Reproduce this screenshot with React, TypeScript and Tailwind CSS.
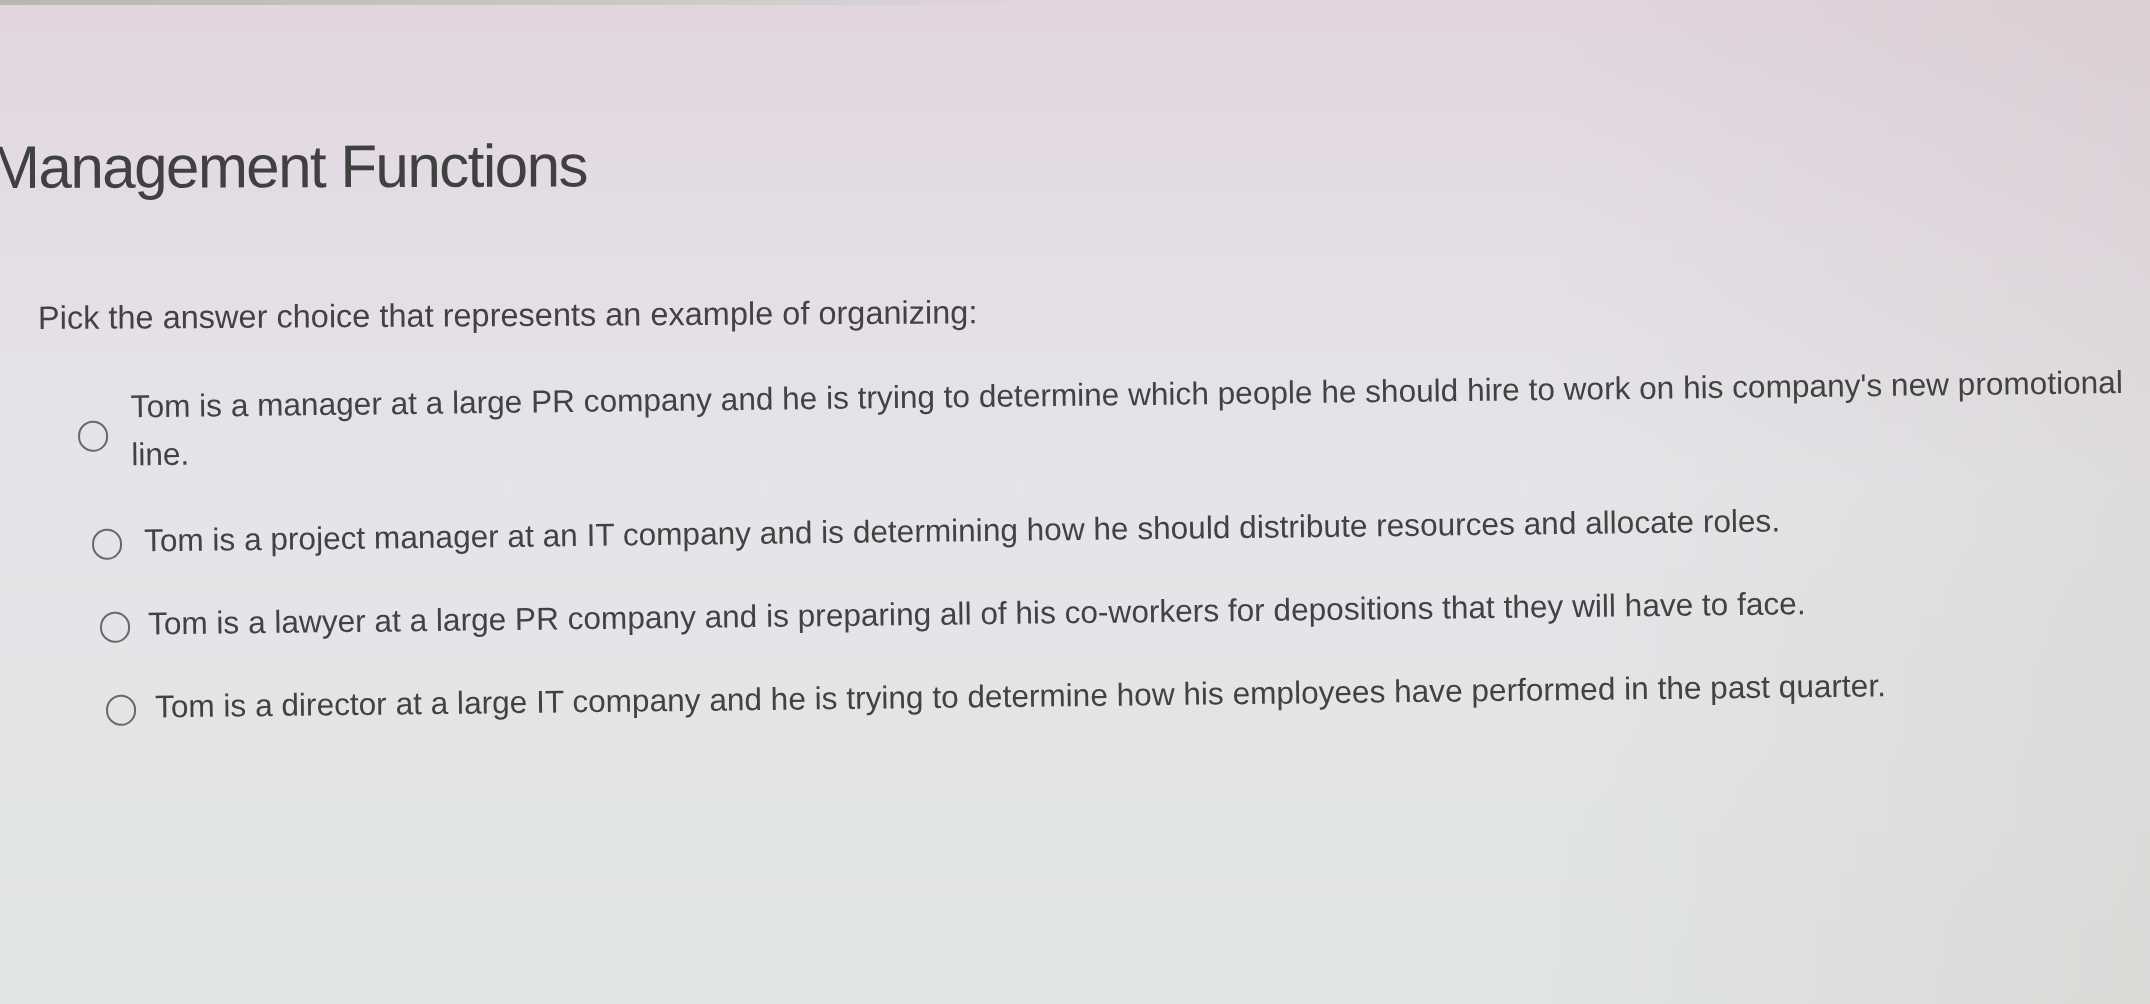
const options = [
  {
    text: "Tom is a manager at a large PR company and he is trying to determine which people he should hire to work on his company's new promotional line.",
    row: 'ml-[78px] mt-[45px] gap-[23px]',
    radio: 'mt-[10px]',
  },
  {
    text: 'Tom is a project manager at an IT company and is determining how he should distribute resources and allocate roles.',
    row: 'ml-[92px] mt-[38px] gap-[22px]',
    radio: 'mt-[6px]',
  },
  {
    text: 'Tom is a lawyer at a large PR company and is preparing all of his co-workers for depositions that they will have to face.',
    row: 'ml-[100px] mt-[35px] gap-[18px]',
    radio: 'mt-[6px]',
  },
  {
    text: 'Tom is a director at a large IT company and he is trying to determine how his employees have performed in the past quarter.',
    row: 'ml-[106px] mt-[35px] gap-[19px]',
    radio: 'mt-[6px]',
  },
];

function Radio({ className }: { className: string }) {
  return (
    <span
      className={`block h-[31px] w-[30px] shrink-0 rounded-full border-[2.5px] border-[#686868] ${className}`}
    />
  );
}

export default function App() {
  return (
    <div
      className="h-[1004px] w-full overflow-hidden bg-[linear-gradient(to_right,rgba(0,0,0,0)_72%,rgba(185,170,160,0.16)),linear-gradient(to_bottom,#e2d5de_0%,#e4dde5_22%,#e5e5e9_48%,#e0e4e2_100%)] text-[#424242]"
      style={{ fontFamily: '"Liberation Sans", Arial, sans-serif' }}
    >
      <div className="h-[5px] bg-[linear-gradient(to_right,#b6b9b3,#c9cac5_30%,rgba(0,0,0,0)_48%)]" />

      <div className="blur-[0.4px]">
        <h1 className="ml-[-10px] mt-[133px] h-[60px] text-[60px] font-normal leading-[60px] tracking-[-1.5px] text-[#404040] -rotate-[0.15deg] origin-left">
          Management Functions
        </h1>

        <p className="ml-[38px] mt-[100px] text-[32.5px] leading-[40px] -rotate-[0.35deg] origin-left">
          Pick the answer choice that represents an example of organizing:
        </p>

        <div className="flex flex-col">
          {options.map((o, i) => (
            <label
              key={i}
              className={`flex items-center -rotate-[0.7deg] origin-left ${o.row}`}
            >
              <Radio className={o.radio} />
              <span className="text-[31.6px] leading-[48px]">{o.text}</span>
            </label>
          ))}
        </div>
      </div>
    </div>
  );
}
